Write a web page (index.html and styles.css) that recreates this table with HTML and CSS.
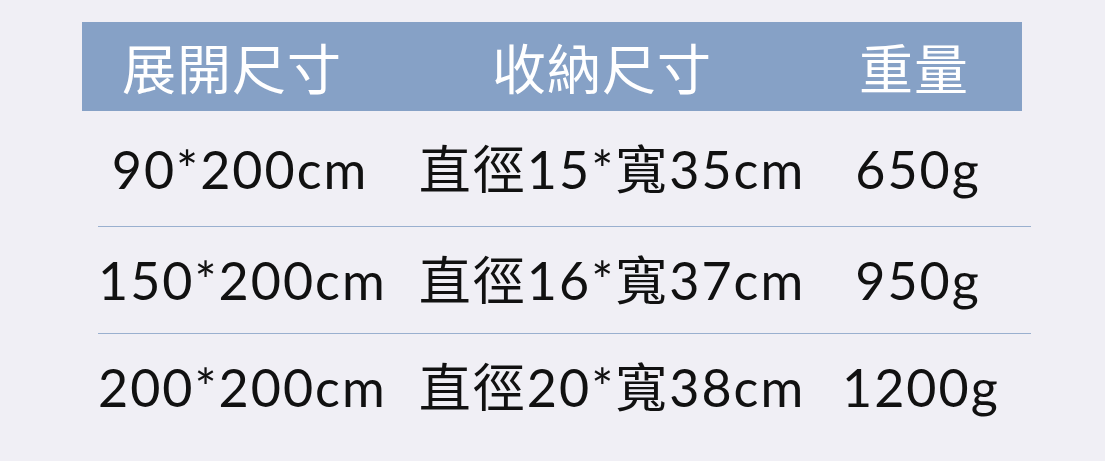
FILE: index.html
```html
<!DOCTYPE html>
<html lang="zh-Hant">
<head>
<meta charset="utf-8">
<link rel="stylesheet" href="styles.css">
</head>
<body>
<div class="page">
  <div class="head">
    <div class="hcell">展開尺寸</div>
    <div class="hcell">收納尺寸</div>
    <div class="hcell">重量</div>
  </div>
  <div class="rows">
    <div class="row r1">
      <div class="cell">90*200cm</div>
      <div class="cell">直徑15*寬35cm</div>
      <div class="cell">650g</div>
    </div>
    <div class="row r2">
      <div class="cell">150*200cm</div>
      <div class="cell">直徑16*寬37cm</div>
      <div class="cell">950g</div>
    </div>
    <div class="row r3">
      <div class="cell">200*200cm</div>
      <div class="cell">直徑20*寬38cm</div>
      <div class="cell">1200g</div>
    </div>
  </div>
</div>
</body>
</html>
```
FILE: styles.css
```css
html, body {
  margin: 0;
  padding: 0;
  background: #f0eff5;
}
.page {
  width: 1105px;
  height: 461px;
  padding-top: 22px;
  box-sizing: border-box;
}
.head {
  margin-left: 82px;
  width: 940px;
  height: 89px;
  background: #86a1c6;
  display: grid;
  grid-template-columns: 300px 440px 184px 1fr;
  align-items: center;
}
.hcell {
  text-align: center;
  color: #ffffff;
  font-family: "Noto Sans CJK TC", sans-serif;
  font-weight: 400;
  font-size: 54px;
  line-height: 1;
  letter-spacing: 1px;
}
.rows {
  margin-left: 98px;
  width: 933px;
}
.row {
  display: grid;
  grid-template-columns: 284px 460px 152px 1fr;
  align-items: center;
}
.r1 { height: 115px; border-bottom: 1.5px solid #9ab0cf; }
.r2 { height: 106px; border-bottom: 1.5px solid #9ab0cf; }
.r3 { height: 106px; }
.cell {
  text-align: center;
  white-space: nowrap;
  color: #111111;
  font-family: Lato, "Noto Sans CJK TC", sans-serif;
  font-size: 52px;
  line-height: 1;
  letter-spacing: 2px;
}
```
